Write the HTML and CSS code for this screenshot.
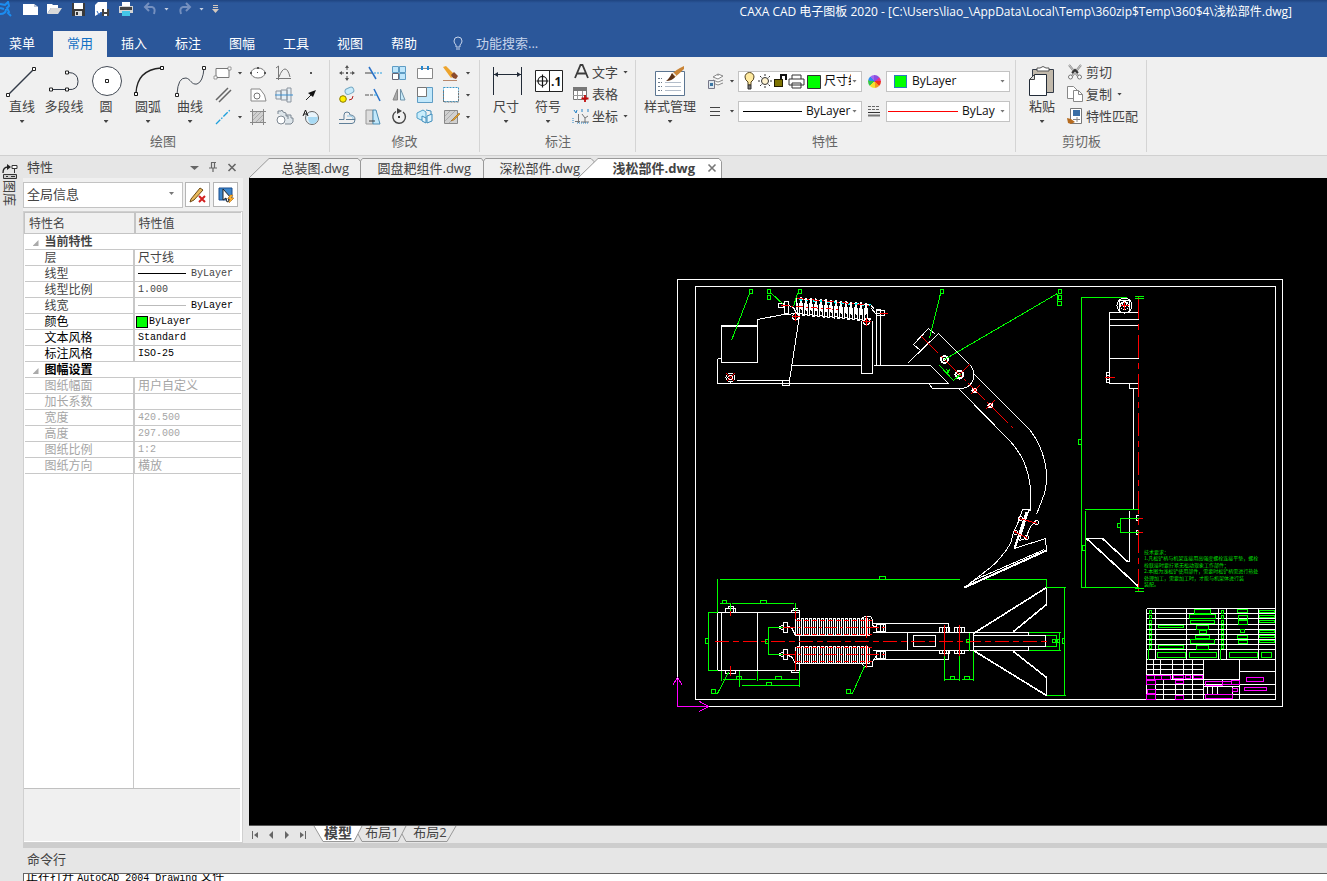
FILE: index.html
```html
<!DOCTYPE html>
<html lang="zh-CN">
<head>
<meta charset="utf-8">
<title>CAXA CAD 电子图板 2020</title>
<link rel="stylesheet" href="styles.css">
</head>
<body>
<header class="titlebar">
  <div class="quick">
    <svg class="q-app" viewBox="0 0 12 16"><path d="M0 3l5 1 3-3 1 4-2 2 2 4-1 1 3 3M0 7l4 1M0 13c4 0 6-2 6-5" fill="none" stroke="#1c8df0" stroke-width="2"/></svg>
    <button class="q-btn" aria-label="新建"><svg viewBox="0 0 16 16"><path d="M1 3h11l4 3v8H1z" fill="#fff"/><path d="M12 3v3h4z" fill="#b9c4d6"/></svg></button>
    <button class="q-btn" aria-label="打开"><svg viewBox="0 0 16 16"><path d="M1 13V3h5l1 1h5v3H5z" fill="#fff"/><path d="M5 7h11l-4 6H1z" fill="#d9d9d9"/></svg></button>
    <button class="q-btn" aria-label="保存"><svg viewBox="0 0 16 16"><path d="M2 2h13v13H2z" fill="#3a3a3a"/><path d="M4 2h9v6H4z" fill="#fff"/><path d="M5 10h7v5H5z" fill="#ddd"/><path d="M6 11h2v3H6z" fill="#333"/></svg></button>
    <button class="q-btn" aria-label="另存为"><svg viewBox="0 0 16 16"><path d="M1 15V4l3-3h9v7" fill="#fff"/><path d="M3 10l2 4 2-3 2 3" fill="none" stroke="#2b66c0"/><path d="M8 8h7v7H8z" fill="#444"/><path d="M10 8h3v3h-3zM10 13h3v2h-3z" fill="#fff"/></svg></button>
    <button class="q-btn" aria-label="打印"><svg viewBox="0 0 16 16"><path d="M4 1h8v5H4z" fill="#fff"/><path d="M1 5h14v7H1z" fill="#d4d4d4"/><path d="M2 6h12v3H2z" fill="#444"/><path d="M4 10h8v5H4z" fill="#43c6e8"/></svg></button>
    <button class="q-btn undo" aria-label="撤销"><svg viewBox="0 0 16 16"><path d="M7 2L3 6l4 4M3 6h7q4 1 2 7" fill="none" stroke="#7590bf" stroke-width="2"/></svg></button>
    <span class="caret light"></span>
    <button class="q-btn redo" aria-label="恢复"><svg viewBox="0 0 16 16"><path d="M9 2l4 4-4 4M13 6H6q-4 1-2 7" fill="none" stroke="#7590bf" stroke-width="2"/></svg></button>
    <span class="caret light last"></span>
    <svg class="q-more" viewBox="0 0 7 8"><path d="M1 0h5v1H1zM1 2h5v1H1zM0 4h7L3.500 8z" fill="#d5c9bd"/></svg>
  </div>
  <h1 class="title">CAXA CAD 电子图板 2020 - [C:\Users\liao_\AppData\Local\Temp\360zip$Temp\360$4\浅松部件.dwg]</h1>
</header>
<nav class="menubar">
  <button class="menu first">菜单</button>
  <button class="menu active">常用</button>
  <button class="menu">插入</button>
  <button class="menu">标注</button>
  <button class="menu">图幅</button>
  <button class="menu">工具</button>
  <button class="menu">视图</button>
  <button class="menu">帮助</button>
  <label class="search"><svg viewBox="0 0 12 14"><path d="M4 9q-2-2-2-4a4 4 0 0 1 8 0q0 2-2 4v2H4zM4 13h4" fill="none" stroke="#c5d3ea"/></svg><input type="text" placeholder="功能搜索..." aria-label="功能搜索"></label>
</nav>

<section class="ribbon">
  <div class="group g-draw">
    <div class="group-body">
      <button class="big"><svg viewBox="0 0 36 32"><path d="M4 29L30 3" stroke="#333b48" stroke-width="1.500"/><path d="M2.500 27.500h3v3h-3zM28.500 1.500h3v3h-3z" fill="#fff" stroke="#222"/></svg>直线<span class="caret"></span></button>
      <button class="big"><svg viewBox="0 0 36 32"><path d="M5 23.500h16M22 6.500q10 0 10 9t-10 8" fill="none" stroke="#333b48"/><path d="M3.500 22h3v3h-3zM19.500 22h3v3h-3zM19.500 5h3v3h-3z" fill="#fff" stroke="#222"/></svg>多段线</button>
      <button class="big"><svg viewBox="0 0 36 32"><circle cx="19" cy="15" r="14.500" fill="#fff" stroke="#444b55"/><path d="M17.500 13.500h3v3h-3z" fill="#fff" stroke="#222"/></svg>圆<span class="caret"></span></button>
      <button class="big"><svg viewBox="0 0 36 32"><path d="M6 27Q7 4 31 2" fill="none" stroke="#222" stroke-width="1.300"/><path d="M4.500 26.500h3v3h-3zM30.500.5h3v3h-3z" fill="#fff" stroke="#111"/></svg>圆弧<span class="caret"></span></button>
      <button class="big"><svg viewBox="0 0 36 32"><path d="M5 28q1-17 9-16c5 1 5 7 11 6q6-2 7-16" fill="none" stroke="#444b55"/><path d="M3.500 27.500h3v3h-3zM30.500.5h3v3h-3z" fill="#fff" stroke="#222"/></svg>曲线<span class="caret"></span></button>
      <div class="tools draw-tools">
        <button aria-label="矩形"><svg viewBox="0 0 20 20"><path d="M3 5.500h13v9H3z" fill="#fff" stroke="#777"/><path d="M1 13h3v3H1zM15 4h3v3h-3z" fill="#fff" stroke="#777" stroke-width=".7"/></svg></button><span class="caret"></span>
        <button aria-label="椭圆"><svg viewBox="0 0 20 20"><ellipse cx="10" cy="10" rx="7" ry="5" fill="#fff" stroke="#777"/><path d="M9 4h2v2H9zM2 9h2v2H2zM9 9h1v1H9zM16 9h2v2h-2z" fill="#555"/></svg></button>
        <button aria-label="公式曲线"><svg viewBox="0 0 20 20"><path d="M4.500 3v14M2 15.500h15M2 5l2.500-2M5 14q3-8 6-8t5 8" fill="none" stroke="#777"/></svg></button>
        <button aria-label="点"><svg viewBox="0 0 20 20"><path d="M9 9h2v2H9z" fill="#555"/></svg></button>
        <button aria-label="平行线"><svg viewBox="0 0 20 20"><path d="M3 15L15 3M6 17L18 5" stroke="#666" stroke-width="1.500"/></svg></button><span></span>
        <button aria-label="孔"><svg viewBox="0 0 20 20"><path d="M3 4h9q6 6 6 12H3z" fill="#fff" stroke="#888"/><circle cx="9" cy="11" r="3" fill="#fff" stroke="#777"/></svg></button>
        <button aria-label="轴"><svg viewBox="0 0 20 20"><path d="M2 6h5v8H2zM7 5h6v10H7zM13 3h4v14h-4z" fill="#e6eef4" stroke="#8b949e"/><path d="M1 10h18" stroke="#3b8fd0"/></svg></button>
        <button aria-label="箭头"><svg viewBox="0 0 20 20"><path d="M5 15l6-6" stroke="#222"/><path d="M15 5l-3 7-5-4z" fill="#111"/></svg></button>
        <button aria-label="构造线"><svg viewBox="0 0 20 20"><path d="M3 17L17 3" stroke="#1d9fdc" stroke-width="1.300" stroke-dasharray="6 1.500 1.500 1.500"/></svg></button><span class="caret"></span>
        <button aria-label="填充"><svg viewBox="0 0 20 20"><path d="M4 4h12v12H4z" fill="#d0d0d0"/><path d="M2 4.500h16M4.500 2v16M15.500 2v16M2 15.500h16" stroke="#888"/><path d="M5 13l8-8M5 9l4-4M8 15l7-7M12 15l3-3" stroke="#999" stroke-width=".7"/></svg></button>
        <button aria-label="零件"><svg viewBox="0 0 20 20"><path d="M4 7V4h3l1-1 1 2 3 1v3h2v3M12 8h5v3h2v4l-2 2h-6" fill="#dde5ea" stroke="#7d8792"/><circle cx="7" cy="13" r="4" fill="#fff" stroke="#7d8792"/></svg></button>
        <button aria-label="局部放大"><svg viewBox="0 0 20 20"><circle cx="11" cy="11" r="6.500" fill="#e8f4fb" stroke="#666"/><path d="M7 10h10q0 6-6 7-4-1-4-7z" fill="#a8daf4"/><path d="M2 9l2.500-6L7 9M3 7h3" fill="none" stroke="#111"/></svg></button>
      </div>
    </div>
    <h2>绘图</h2>
  </div>

  <div class="group g-edit">
    <div class="group-body">
      <div class="tools edit-tools">
        <button aria-label="平移"><svg viewBox="0 0 20 20"><path d="M10 3v4M10 13v4M3 10h4M13 10h4" stroke="#555"/><path d="M10 2l2 3H8zM10 18l2-3H8zM2 10l3-2v4zM18 10l-3-2v4zM9 9h2v2H9z" fill="#555"/></svg></button>
        <button aria-label="裁剪"><svg viewBox="0 0 20 20"><path d="M2 10h8" stroke="#444"/><path d="M6 4l7 12" stroke="#2a72c8" stroke-width="1.500"/><path d="M11 10h8" stroke="#2a9fe0" stroke-dasharray="2 1"/></svg></button>
        <button aria-label="阵列"><svg viewBox="0 0 20 20"><path d="M3.500 3.500h6v6h-6zM10.500 3.500h6v6h-6zM10.500 10.500h6v6h-6z" fill="#bfe6fb" stroke="#5e9cc4"/><path d="M3.500 10.500h6v6h-6z" fill="#fff" stroke="#667"/></svg></button>
        <button aria-label="打断"><svg viewBox="0 0 20 20"><path d="M6 5.500H2.500v10h15v-10H14M8 5.500h4" fill="#fff" stroke="#888"/><path d="M6 3h2v4H6zM12 3h2v4h-2z" fill="#2386cf"/></svg></button>
        <button aria-label="删除"><svg viewBox="0 0 20 20"><path d="M2 4l3-1 9 9-4 3z" fill="#eda42d"/><path d="M10 12l3-3 4 4-2 3-3-1z" fill="#8c4b2c"/><path d="M2 17.500h14" stroke="#b8876a"/></svg></button><span class="caret"></span>
        <button aria-label="复制"><svg viewBox="0 0 20 20"><rect x="8" y="3" width="9" height="6" rx="3" fill="#c8ebfb" stroke="#77a9c4" transform="rotate(-25 12 6)"/><circle cx="6" cy="14" r="3.300" fill="#ffef00" stroke="#8a7900"/><path d="M12 15q4 0 4-4" fill="none" stroke="#b42020"/></svg></button>
        <button aria-label="延伸"><svg viewBox="0 0 20 20"><path d="M2 10h4M7 10h3" stroke="#555"/><path d="M11 4l6 12" stroke="#2a72c8" stroke-width="1.500"/><path d="M11 10h3" stroke="#2a9fe0"/></svg></button>
        <button aria-label="镜像"><svg viewBox="0 0 20 20"><path d="M8.500 4v11H4z" fill="#aaa" stroke="#888"/><path d="M11.500 4v11H16z" fill="#c9ebfa" stroke="#6f93aa"/></svg></button>
        <button aria-label="缩放"><svg viewBox="0 0 20 20"><path d="M2.500 2.500h15v15h-15z" fill="#c2e8fb" stroke="#5e9cc4"/><path d="M2.500 2.500h9v9h-9z" fill="#fff" stroke="#777"/></svg></button>
        <button aria-label="拉伸"><svg viewBox="0 0 20 20"><path d="M2.500 2.500h15v14h-15z" fill="#fff" stroke="#3797ca" stroke-dasharray="2 1"/><path d="M2.500 6v11h15V6" fill="none" stroke="#777" stroke-dasharray="2 1"/></svg></button><span class="caret"></span>
        <button aria-label="等距线"><svg viewBox="0 0 20 20"><path d="M2 12.500h5V8q0-3 3-3t3 3q5 0 5 4.500H9M2 16.500h13q3 0 3-4" fill="none" stroke="#5f7f98"/><path d="M10 9h4q3 1 2 3" fill="none" stroke="#8cc4e4"/></svg></button>
        <button aria-label="拔模"><svg viewBox="0 0 20 20"><path d="M3 3h7v14H3z" fill="#ddd" stroke="#999"/><path d="M10 3h3l4 14h-7z" fill="#c2e8fb" stroke="#4c8db3"/><path d="M6 14h6" stroke="#444"/></svg></button>
        <button aria-label="旋转"><svg viewBox="0 0 20 20"><path d="M7 4.500A6.300 6.300 0 1 0 14 5" fill="none" stroke="#444" stroke-width="1.400"/><path d="M8 1l5 3-5 3z" fill="#444"/><path d="M9 9h2v2H9z" fill="#333"/></svg></button>
        <button aria-label="分解"><svg viewBox="0 0 20 20"><path d="M2 6l6-3 3 2v6l-5 2-4-2z" fill="#c9edfc" stroke="#4f9fc8"/><path d="M7 9l4 2v5l-4-2zM12 9l5-2v7l-5 2z" fill="#e0f4fd" stroke="#3c8cbb"/><path d="M11 3l5 1v3" fill="none" stroke="#3c8cbb"/></svg></button>
        <button aria-label="编辑填充"><svg viewBox="0 0 20 20"><path d="M3.500 3.500h13v13h-13z" fill="#d0d0d0" stroke="#888"/><path d="M4 9l5-5M4 14L14 4M8 16l8-8" stroke="#aaa"/><path d="M18 6l-6 6-2 2 3-1 6-6z" fill="#e8a42c" stroke="#8d5b12" stroke-width=".5"/></svg></button><span class="caret"></span>
      </div>
    </div>
    <h2>修改</h2>
  </div>

  <div class="group g-dim">
    <div class="group-body">
      <button class="big"><svg viewBox="0 0 36 32"><path d="M5.500 1v28M33.500 1v28M6 8.500h27" stroke="#222b38"/><path d="M6 8.500l4-2.500v5zM33 8.500l-4-2.500v5z" fill="#222b38"/></svg>尺寸<span class="caret"></span></button>
      <button class="big"><svg viewBox="0 0 36 32"><path d="M5.500 4.500h27v21h-27zM19.500 4.500v21" fill="#fff" stroke="#222"/><circle cx="12.500" cy="15" r="4.500" fill="none" stroke="#111" stroke-width="1.200"/><path d="M6.500 15h12M12.500 8.500v13" stroke="#111" stroke-width="1.200"/><text x="21" y="20" class="symbol-text">.1</text></svg>符号<span class="caret"></span></button>
      <div class="list">
        <button><svg viewBox="0 0 20 20"><path d="M4 16L9.500 3h2L17 16M6 11.500h9" fill="none" stroke="#3c3c3c" stroke-width="1.800"/></svg>文字<span class="caret"></span></button>
        <button><svg viewBox="0 0 20 20"><path d="M2.500 3.500h13v12h-13z" fill="#fff" stroke="#777"/><path d="M2 3h14v4H2z" fill="#777"/><path d="M2 11.500h13M6.500 7v9M11.500 7v9" stroke="#999"/><path d="M14 11v7M10.500 14.500h7" stroke="#c00d0d" stroke-width="1.800"/></svg>表格</button>
        <button><svg viewBox="0 0 20 20"><path d="M7.500 8v9M4 15.500h5M11 8l3 4v5M17 10l-3 2M10 16h8" fill="none" stroke="#777"/><path d="M3 4l2 3 1-3M11 3v3M17 3v3" stroke="#2684c8" fill="none"/><path d="M2 12v6M6 17h12" stroke="#2684c8" stroke-dasharray="1 1"/></svg>坐标<span class="caret"></span></button>
      </div>
    </div>
    <h2>标注</h2>
  </div>

  <div class="group g-prop">
    <div class="group-body">
      <button class="big wide"><svg viewBox="0 0 36 32"><path d="M3.500 5.500h29v24h-29z" fill="#fff" stroke="#5b7591"/><path d="M6 12.500h4M6 16.500h4M6 20.500h4M6 24.500h4" stroke="#6d7b8b" stroke-dasharray="2 1"/><path d="M13 16.500h16M13 20.500h16M13 24.500h16" stroke="#b3bdca"/><path d="M32 0q-9 4-13 9l3 3q6-5 10-9z" fill="#c98436"/><path d="M20 7q-3 6-6 8 6 0 9-4z" fill="#5d3318"/><path d="M21 7l3 3" stroke="#eee" stroke-width="1.500"/></svg>样式管理<span class="caret"></span></button>
      <div class="prop-grid">
        <button aria-label="图层"><svg viewBox="0 0 20 20"><path d="M8 6l5-3 5 2-5 3zM8 9l5 2 5-2M8 12l5 2 5-2M13 3v2" fill="#fff" stroke="#888"/><path d="M3.500 9.500h6v8h-6z" fill="#dfe8ef" stroke="#778"/><path d="M5 12h3v3H5z" fill="#3b76a5"/></svg></button><span class="caret"></span>
        <div class="combo">
          <svg class="layer-icons" viewBox="0 0 78 20"><path d="M5 11q-3-2-3-5a4 4 0 0 1 9 0q0 3-3 5v3H5z" fill="#ffeaa0" stroke="#53431f"/><path d="M5 14h3v4H5z" fill="#777" stroke="#333"/><circle cx="22" cy="10" r="3.500" fill="#fff3cf" stroke="#333"/><path d="M22 3v2M22 15v2M15 10h2M27 10h2M17 5l1.500 1.500M25.500 13.500L27 15M27 5l-1.500 1.500M17 15l1.500-1.500" stroke="#333"/><path d="M31 8h9v8h-9z" fill="#201c00"/><path d="M32 10h7M32 12h7M32 14h7" stroke="#d9c800"/><path d="M38 8V4h5v5" fill="none" stroke="#111" stroke-width="2"/><path d="M49 8V4h9v4M46 8h15v6H46zM49 12h9v5h-9z" fill="#fff" stroke="#333"/><path d="M64.500 4.500h13v13h-13z" fill="#0f0" stroke="#333"/></svg>
          <select aria-label="当前图层"><option>尺寸线</option></select><span class="caret grey"></span>
        </div>
        <span class="wheel"></span>
        <div class="combo color"><span class="swatch"></span><select aria-label="颜色"><option>ByLayer</option></select><span class="caret grey"></span></div>
        <button aria-label="线型"><svg viewBox="0 0 20 20"><path d="M5 6.500h10M5 10.500h10M5 14.500h10" stroke="#444"/></svg></button><span class="caret"></span>
        <div class="combo"><span class="stroke-line"></span><select aria-label="线型"><option>ByLayer</option></select><span class="caret grey"></span></div>
        <svg class="weights" viewBox="0 0 14 14"><path d="M1 2.500h12M1 5.500h12" stroke="#666" stroke-dasharray="3 1"/><path d="M1 8.500h12" stroke="#333"/><path d="M1 11.500h12" stroke="#777" stroke-width="2"/></svg>
        <div class="combo weight"><span class="stroke-line red"></span><select aria-label="线宽"><option>ByLayer</option></select><span class="caret grey"></span></div>
      </div>
    </div>
    <h2>特性</h2>
  </div>

  <div class="group g-clip">
    <div class="group-body">
      <button class="big"><svg viewBox="0 0 36 32"><path d="M8.500 3.500h21v23h-21z" fill="#c2b9ab" stroke="#333b48"/><path d="M13 5V2h3q3-3 6 0h3v3z" fill="#fff" stroke="#555"/><path d="M10.500 8.500h12v21h-17v-16z" fill="#fff" stroke="#222b38"/><path d="M10.500 8.500v5h-5z" fill="#ddd" stroke="#444"/></svg>粘贴<span class="caret"></span></button>
      <div class="list">
        <button><svg viewBox="0 0 20 20"><path d="M4 3l9 11M16 3L7 14" stroke="#888" stroke-width="2"/><path d="M4 3l9 11M16 3L7 14" stroke="#eee" stroke-width=".7"/><path d="M7 11l3-3 3 3" stroke="#333" stroke-width="2" fill="none"/><circle cx="5.500" cy="15" r="2" fill="#fff" stroke="#777"/><circle cx="14.500" cy="15" r="2" fill="#fff" stroke="#777"/></svg>剪切</button>
        <button><svg viewBox="0 0 20 20"><path d="M2.500 2.500h6l4 4v8h-10z" fill="#fff" stroke="#888"/><path d="M8.500 6.500h5l4 4v7h-9z" fill="#fff" stroke="#888"/><path d="M13.500 6.500v4h4" fill="none" stroke="#888"/></svg>复制<span class="caret"></span></button>
        <button><svg viewBox="0 0 20 20"><path d="M5.500 2.500h11v15h-11z" fill="#fff" stroke="#777"/><path d="M8 4h7v6H8z" fill="#3a6ea5"/><path d="M8 13.500h7M12 11v5" stroke="#888"/><path d="M2 12l4 1 4 3-4 2-3-1z" fill="#b66b1f"/></svg>特性匹配</button>
      </div>
    </div>
    <h2>剪切板</h2>
  </div>
</section>

<main class="workspace">
  <aside class="rail">
    <svg viewBox="0 0 16 17"><path d="M1 10q0-6 5-6" fill="none" stroke="#222" stroke-width="1.300"/><path d="M5 1l4 3-4 3z" fill="#222"/><path d="M10 2.500h5v3h-5zM12.500 5v5" fill="#fff" stroke="#333"/><path d="M1.500 11.500h13v4h-13z" fill="#ccc" stroke="#333"/><path d="M4 13.500h2M9 13.500h4" stroke="#333"/></svg>
    <button>图库</button>
  </aside>

  <section class="props">
    <header>
      <h2>特性</h2>
      <button aria-label="菜单"><svg viewBox="0 0 10 10"><path d="M1 4h9L5.500 8z" fill="#666"/></svg></button>
      <button aria-label="固定"><svg viewBox="0 0 10 10"><path d="M3 .5h5M3.500.5v5M6.500.5v5M1 6h8M5 6v4" fill="none" stroke="#666" stroke-width="1.200"/></svg></button>
      <button aria-label="关闭"><svg viewBox="0 0 10 10"><path d="M1.500 2l7 7M8.500 2l-7 7" stroke="#666" stroke-width="1.600"/></svg></button>
    </header>
    <div class="props-bar">
      <div class="combo big-combo"><select aria-label="选择对象"><option>全局信息</option></select><span class="caret grey"></span></div>
      <button aria-label="清除"><svg viewBox="0 0 18 18"><path d="M2 13L11 2l3 2L5 14l-4 2z" fill="#eab95b" stroke="#6b4a16"/><path d="M10 10l6 6M16 10l-6 6" stroke="#d32020" stroke-width="2"/></svg></button>
      <button aria-label="快速选择"><svg viewBox="0 0 18 18"><path d="M2 2h13v12H2z" fill="#3d86cb" stroke="#1d4f8f"/><path d="M6 3v11l3-2 1 4 2-1-1-3h3z" fill="#fff" stroke="#222"/><path d="M13 9h3l-2 3h3l-5 5 1-4h-2z" fill="#ffb733" stroke="#c26a00" stroke-width=".5"/></svg></button>
    </div>
    <div class="props-frame">
      <div class="props-scroll">
        <table>
          <thead><tr><th>特性名</th><th>特性值</th></tr></thead>
          <tbody>
            <tr class="cat"><td colspan="2"><i></i>当前特性</td></tr>
            <tr><td>层</td><td>尺寸线</td></tr>
            <tr><td>线型</td><td><span class="cell"><b class="ln"></b><span class="mono">ByLayer</span></span></td></tr>
            <tr><td>线型比例</td><td><span class="mono">1.000</span></td></tr>
            <tr><td>线宽</td><td class="dark"><span class="cell"><b class="ln thin"></b><span class="mono">ByLayer</span></span></td></tr>
            <tr class="dark"><td>颜色</td><td><span class="cell tight"><b class="sw"></b><span class="mono">ByLayer</span></span></td></tr>
            <tr class="dark"><td>文本风格</td><td><span class="mono">Standard</span></td></tr>
            <tr class="dark"><td>标注风格</td><td><span class="mono">ISO-25</span></td></tr>
            <tr class="cat dark"><td colspan="2"><i></i>图幅设置</td></tr>
            <tr class="off"><td>图纸幅面</td><td>用户自定义</td></tr>
            <tr class="off"><td>加长系数</td><td></td></tr>
            <tr class="off"><td>宽度</td><td><span class="mono">420.500</span></td></tr>
            <tr class="off"><td>高度</td><td><span class="mono">297.000</span></td></tr>
            <tr class="off"><td>图纸比例</td><td><span class="mono">1:2</span></td></tr>
            <tr class="off"><td>图纸方向</td><td>横放</td></tr>
          </tbody>
        </table>
      </div>
      <div class="props-help"></div>
    </div>
  </section>

  <section class="docs">
    <div class="doc-tabs">
      <button class="doc t1"><svg viewBox="0 0 112 20"><path d="M0 20L20 .5h89l2.500 3V20" fill="#f0f0f0" stroke="#999"/></svg><span>总装图.dwg</span></button>
      <button class="doc t2"><svg viewBox="0 0 123 20"><path d="M-.5 20V3l2-2.500h119l2 3V20" fill="#f0f0f0" stroke="#999"/></svg><span>圆盘耙组件.dwg</span></button>
      <button class="doc t3"><svg viewBox="0 0 110 20"><path d="M-.5 20V3l2-2.500H107l3 3V20" fill="#f0f0f0" stroke="#999"/></svg><span>深松部件.dwg</span></button>
      <button class="doc t4"><svg viewBox="0 0 144 20"><path d="M0 20L20 .5h121l2.500 3V20" fill="#fff" stroke="#999"/></svg><span>浅松部件.dwg</span><svg class="x" viewBox="0 0 10 10"><path d="M1.500 1.500l7 7M8.500 1.500l-7 7" stroke="#777" stroke-width="1.600"/></svg></button>
    </div>
    <div class="canvas">
      <svg viewBox="249 178 1078 647" role="img" aria-label="浅松部件图纸">
        <g transform="translate(.5 .5)" fill="none" shape-rendering="crispEdges">
          <g stroke="#fff">
            <!-- sheet frame -->
            <path d="M677 279H1282V706H677zM695 286H1275V699H695z"/>
            <!-- elevation: frame and beam -->
            <path d="M721 325h36v37h-36zM717 358v25H948M717 358h4M736 380h53M782 380h7v5h-7zM789 380L799 315M757 325V319L783 314 799 313M791 365H861M873 365H930L948 383M861 320V373h11V320M876 365V309h4V365"/>
            <path d="M721 325h36v1h-36zM721 325v37"/>
            <path d="M778 303h5v4h-5zM784 301h4v12h-4zM788 305l5 2 3 6 4 3M871 308l4 5h11M876 310h8v5h-8zM870 304l4 5"/>
            <circle cx="730" cy="377" r="4.500"/><circle cx="730" cy="377" r="2.500"/>
            <circle cx="795" cy="316" r="3"/><circle cx="866" cy="321" r="3"/>
            <g transform="translate(796 297) skewY(5)">
              <path d="M0 0l1 17h2l1-17h1l1 17h2l1-17h1l1 17h2l1-17h1l1 17h2l1-17h1l1 17h2l1-17h1l1 17h2l1-17h1l1 17h2l1-17h1l1 17h2l1-17h1l1 17h2l1-17h1l1 17h2l1-17h1l1 17h2l1-17h1l1 17h2l1-17h1l1 17h2l1-17h1l1 17h2l1-17h1l1 15h3" stroke-width="1.400"/>
              <path d="M0 1h73M2 16h68" stroke-dasharray="3 2"/>
            </g>
            <!-- elevation: shank -->
            <path d="M907 363L938 333 970 365Q976 373 972 381 968 388 960 388H932L929 384M913 344L928 328 935 334M913 344L920 350"/>
            <path d="M974 374L1029 429Q1040 443 1044 460 1048 477 1044 493L1036 514M959 389L1010 441Q1019 452 1023 460 1030 477 1030 493V510"/>
            <path d="M1022 509h7L1014 548 1045 538 1046 550 964 587M1022 509L1018 521 1013 532 1010 543Q1001 558 990 567L964 587 975 579 1044 549M1028 510L1019 540 1025 538 1030 526 1036 520"/>
            <path d="M964 587L1046 550M1026 512L1014 548" stroke-width="2"/>
            <g stroke-width="2"><circle cx="944" cy="359" r="3.500"/><circle cx="959" cy="374" r="4"/><circle cx="974" cy="390" r="2"/><circle cx="990" cy="405" r="2"/></g>
            <circle cx="944" cy="359" r="1"/><circle cx="959" cy="374" r="1.500"/>
            <circle cx="1020" cy="518" r="2"/><circle cx="1036" cy="522" r="2"/><circle cx="1015" cy="532" r="2"/><circle cx="1026" cy="537" r="2"/>
            <!-- side view -->
            <path d="M1138 312H1109V383H1138M1109 319h29M1109 325h29M1109 358h29M1129 383v5h9M1133 388V509M1129 510V561M1106 372h3v10h-3zM1106 375h3M1106 379h3M1119 312V300h10v12M1138 515h-2v5h2M1138 530h-2v4h2"/>
            <path d="M1129 561h-2L1102 538H1086L1138 586" stroke-width="1.600"/>
            <circle cx="1124" cy="305" r="7.500"/><circle cx="1124" cy="305" r="4"/><circle cx="1124" cy="304" r="2"/>
            <!-- plan view -->
            <path d="M717 612H799V670H717zM721 612v58M757 612v58M725 612v-4h10v4M728 608v-2h5v6M725 670v3h10v-3M791 612v-2h8v2M793 610v-2h4M791 670v2h8"/>
            <path d="M778 627l5-3v6zM783 622h4v10h-4zM787 626l4 1 4 8M778 654l5-3v6zM783 649h4v10h-4zM787 655l4 1 4 7M795 618v17h74v-17M795 646v17h74v-17"/>
            <path d="M795 618v17h2v-17h2v17h2v-17h2v17h2v-17h2v17h2v-17h2v17h2v-17h2v17h2v-17h2v17h2v-17h2v17h2v-17h2v17h2v-17h2v17h2v-17h2v17h2v-17h2v17h2v-17h2v17h2v-17h2v17h2v-17h2v17h2v-17h2v17h2v-17h2v17h2v-17h2v17h2v-17h2v17"/>
            <path d="M795 646v17h2v-17h2v17h2v-17h2v17h2v-17h2v17h2v-17h2v17h2v-17h2v17h2v-17h2v17h2v-17h2v17h2v-17h2v17h2v-17h2v17h2v-17h2v17h2v-17h2v17h2v-17h2v17h2v-17h2v17h2v-17h2v17h2v-17h2v17h2v-17h2v17h2v-17h2v17h2v-17h2v17"/>
            <path d="M861 618l3-2h6l2 3v6l4 2M876 624h9v7h-9zM880 624v7M883 624v7M861 663l3 3h8v-5l4-6M876 651h9v7h-9zM880 651v7M883 651v7"/>
            <path d="M872 623H948v9M872 632H1028v3M872 650H1028v-4M872 659H948v-9M907 632v18M913 635h22v11h-22zM973 635h72v11h-72M973 632v18"/>
            <path d="M939 632v-5h10v5M941 627h5M942 627v5M946 627v5M954 632v-5h10v5M956 627h5M957 627v5M961 627v5M939 650v3h10v-3M942 650v3M946 650v3M954 650v3h10v-3M957 650v3M961 650v3"/>
            <path d="M973 633L1046 587V604L1013 631V632M973 650L1046 695V677L1013 651" stroke-width="1.600"/>
            <!-- title block -->
            <path d="M1146 608H1275M1146 608V699M1146 613H1275M1146 618H1275M1146 624H1275M1146 629H1275M1146 634H1275M1146 639H1275M1146 644H1275M1146 649H1275M1146 659H1275M1155 608v51M1186 608v51M1218 608v51M1226 608v51M1258 608v51"/>
            <path d="M1203 659v40M1239 659v40M1146 664h57M1146 669h57M1146 674h57M1146 679h93M1153 659v15M1160 659v15M1172 659v20M1183 659v40M1192 659v40M1146 684h57M1146 689h57M1146 694h57M1155 679v20M1163 679v20M1175 679v20M1239 671h36M1203 684h72M1203 694h72M1203 686h36M1207 686v7M1212 686v7M1217 686v7M1232 686v7M1222 679v7"/>
          </g>
          <g stroke="#0ff" stroke-width="2"><path d="M799 299L870 305" stroke-dasharray="3 4 2 5"/></g>
          <g stroke="#f00">
            <path d="M781 305L838 309M797 298L872 305" stroke-dasharray="7 3 2 3"/>
            <path d="M791 316h8M795 312v8M862 321h8M866 317v8M726 373l8 8M734 373l-8 8M879 313h8M955 378l14-14"/>
            <path d="M921 336L1015 430" stroke-dasharray="24 3 3 3"/>
            <path d="M970 394l9-9M985 409l9-9M1019 518l18 5M1014 531l13 7M1104 377h10M1120 305h8M1124 301v8M1138 518h4M1138 532h4"/>
            <path d="M1138 295V593" stroke-dasharray="23 5 6 5"/>
            <path d="M714 641H1047" stroke-dasharray="14 4 6 4"/>
            <path d="M795 620h76M795 634h76M795 647h76M795 661h76" stroke-dasharray="5 3"/>
            <path d="M782 627h105M782 654h105" stroke-dasharray="12 3 3 3"/>
            <path d="M730 602v13M730 665v10M795 610v8M795 650v20M866 615v22M866 644v23M944 624v32M959 624v32"/>
          </g>
          <g stroke="#0f0">
            <!-- leaders -->
            <path d="M749 293L731 340M749 289h3v4h-3zM771 293l12 11M767 289h3v4h-3zM767 295h3v4h-3zM798 289h3v4h-3zM797 293l-4 13"/>
            <path d="M940 293L929 338M940 289h3v4h-3zM1057 293L944 359M1057 293v12h4v-4h-4M1058 289h3v4h-3zM1058 295h3v4h-3zM939 365l14 15 8-7M946 369l3 4M949 369l-2 4"/>
            <!-- vertical dimensions -->
            <path d="M1080 297h46M1081 297V587M1080 587h58M1078 439h3v5h-3zM1084 509h54M1085 510V586M1082 545h3v5h-3zM1119 518h19M1119 532h19M1120 518v14M1117 523h3v4h-3zM1134 296h9M1134 298h9M1134 588h9M1134 591h9"/>
            <!-- plan dimensions -->
            <path d="M717 578v34M719 579H959M985 579h60M879 576h6v3h-6zM1046 578v9M719 603h10M731 603h62M722 600h4v3h-4zM760 600h6v3h-6zM730 602v8M795 602v8"/>
            <path d="M707 612h10M707 670h10M708 612v58M705 638h3v5h-3zM767 627h15M767 654h15M768 627v27M765 639h3v4h-3z"/>
            <path d="M722 679h33M758 679h39M736 676h5v3h-5zM775 676h6v3h-6zM741 685h57M766 682h5v3h-5zM721 670v10M757 670v10M739 670v16M799 670v16M710 693h7l11-21M711 689h4v4h-4zM845 693h7l12-27M846 689h4v4h-4z"/>
            <path d="M944 655v25M959 655v25M973 650v30M944 679h14M961 679h11M950 676h4v3h-4zM964 676h5v3h-5zM969 632v18M966 639h3v3h-3z"/>
            <path d="M1046 587h19M1046 695h19M1064 587v108M1062 638h2v5h-2zM1028 632h32M1028 650h32M1059 632v18M1057 639h2v3h-2zM1045 635h11v11h-11M1052 639h3v3h-3z"/>
            <!-- parts list entries -->
            <path d="M1149 610h2v3h-2zM1149 615h2v3h-2zM1149 620h2v3h-2zM1149 625h2v3h-2zM1149 630h2v3h-2zM1149 635h2v3h-2zM1149 640h2v3h-2zM1149 645h2v3h-2zM1221 610h2v3h-2zM1221 615h2v3h-2zM1221 620h2v3h-2zM1221 625h2v3h-2zM1221 630h2v3h-2zM1221 635h2v3h-2zM1221 640h2v3h-2zM1221 645h2v3h-2z"/>
            <path d="M1194 609h16v4h-16zM1189 614h26v4h-26zM1190 620h24v3h-24zM1196 625h12v4h-12zM1199 630h7v3h-7zM1195 635h14v3h-14zM1190 639h24v4h-24zM1196 645h12v4h-12zM1158 625h25v2h-25zM1158 645h25v3h-25z"/>
            <path d="M1237 609h10v3h-10zM1238 615h9v4h-9zM1238 620h9v4h-9zM1240 629h4v3h-4zM1237 635h10v3h-10zM1238 640h9v3h-9zM1259 610h15v2h-15zM1259 615h15v2h-15zM1259 620h15v2h-15zM1259 630h15v2h-15zM1259 635h15v2h-15zM1259 640h15v2h-15z"/>
            <path d="M1157 652h28v5h-28zM1189 652h27v5h-27zM1229 652h28v5h-28zM1261 652h10v5h-10zM1148 648v11M1220 648v11"/>
          </g>
          <g stroke="#f0f">
            <path d="M1146 675h8v4h-8zM1154 675h7v4h-7zM1161 675h9v4h-9zM1173 675h10v3h-10zM1185 675h5v3h-5zM1193 675h9v3h-9zM1146 680h9v4h-9zM1175 680h8v3h-8zM1147 689h8v4h-8zM1146 694h9v5h-9zM1175 695h8v4h-8zM1205 681h17v4h-17zM1222 681h9v3h-9zM1231 680h8v4h-8zM1232 688h5v3h-5zM1205 694h27v4h-27zM1246 677h17v4h-17zM1244 687h22v3h-22z"/>
            <path d="M677 678V706H708M677 677l-5 8M677 677l5 8M708 706l-9-5M708 706l-9 5"/>
          </g>
        </g>
        <g class="notes">
          <text x="1144" y="554">技术要求：</text>
          <text x="1144" y="560">1.凡松铲柄与机架连接用高强度螺栓连接平垫，螺栓</text>
          <text x="1144" y="567">栓联接时要拧紧无松动现象工作部件；</text>
          <text x="1144" y="573">2.本图为浅松铲使用部件，需要时松铲柄需进行热处</text>
          <text x="1144" y="580">处理加工，需要加工时，才能与机架体进行装</text>
          <text x="1144" y="586">装配。</text>
        </g>
      </svg>
    </div>
    <div class="sheet-tabs">
      <div class="nav">
        <button aria-label="第一页"><svg viewBox="0 0 8 8"><path d="M1 0h1v8H1zM7 1v6L3 4z" fill="#666"/></svg></button>
        <button aria-label="上一页"><svg viewBox="0 0 8 8"><path d="M6 0v8L2 4z" fill="#666"/></svg></button>
        <button aria-label="下一页"><svg viewBox="0 0 8 8"><path d="M2 0v8l4-4z" fill="#666"/></svg></button>
        <button aria-label="最后页"><svg viewBox="0 0 8 8"><path d="M6 0h1v8H6zM1 1v6l4-3z" fill="#666"/></svg></button>
      </div>
      <button class="sheet on"><svg viewBox="0 0 48 17"><path d="M0 0l9 15.500h31L48 0" fill="#fff" stroke="#999"/></svg><span>模型</span></button>
      <button class="sheet second"><svg viewBox="0 0 48 17"><path d="M0 8l4 7.500h36L48 0" fill="none" stroke="#999"/></svg><span>布局1</span></button>
      <button class="sheet"><svg viewBox="0 0 48 17"><path d="M-4 8l4 7.500h41L50 0" fill="none" stroke="#999"/></svg><span>布局2</span></button>
    </div>
  </section>
</main>

<footer class="command">
  <h2>命令行</h2>
  <div class="log" role="log">正在打开 <span class="mono">AutoCAD 2004 Drawing</span> 文件</div>
</footer>
</body>
</html>
```
FILE: styles.css
```css
* { box-sizing: border-box; }

body {
  margin: 0;
  height: 100vh;
  display: flex;
  flex-direction: column;
  overflow: hidden;
  background: #e6e6e6;
  color: #444;
  font: 13px/18px "Open Sans", "Noto Sans CJK SC", sans-serif;
}

button, input, select { font: inherit; color: inherit; }
button { border: 0; padding: 0; background: none; }
h1, h2 { margin: 0; font-size: 13px; font-weight: 400; }
svg { display: block; flex: none; }

.caret {
  width: 5px;
  height: 3px;
  flex: none;
  background: #444;
  clip-path: polygon(0 0, 100% 0, 50% 100%);
}
.caret.light { background: #c5cfe2; }
.caret.grey { background: #777; }

/* title bar */
.titlebar {
  height: 31px;
  flex: none;
  display: flex;
  justify-content: space-between;
  background: linear-gradient(#1f4480, #2b579a 3px);
  color: #fff;
  overflow: hidden;
}
.quick { display: flex; align-items: center; height: 18px; }
.q-app { width: 12px; height: 16px; margin-right: 10px; }
.q-btn { width: 16px; margin-right: 8px; }
.q-btn.undo, .q-btn.redo { margin-right: 6px; }
.q-btn svg { width: 16px; height: 16px; }
.quick .caret.light { margin-right: 8px; }
.q-more { width: 7px; height: 8px; }
.title { font-size: 12px; line-height: 24px; margin-right: 35px; white-space: nowrap; }

/* menu tabs */
.menubar { height: 26px; flex: none; display: flex; background: #2b579a; color: #fff; }
.menu { width: 54px; padding-bottom: 2px; }
.menu.first { width: 44px; margin-right: 9px; }
.menu.active { background: #f0f0f0; color: #1270c4; }
.search { display: flex; align-items: center; gap: 12px; margin-left: 21px; padding-bottom: 2px; color: #c5d3ea; }
.search svg { width: 12px; height: 14px; }
.search input { width: 120px; border: 0; padding: 0; background: none; outline: 0; }
.search input::placeholder { color: #c5d3ea; opacity: 1; }

/* ribbon */
.ribbon {
  height: 99px;
  flex: none;
  display: flex;
  background: #f0f0f0;
  border-bottom: 1px solid #d0d0d0;
  padding: 3px 0;
}
.group { display: flex; flex-direction: column; border-right: 1px solid #d4d4d4; }
.group-body { display: flex; height: 73px; }
.group h2 { text-align: center; line-height: 16px; padding-right: 4px; color: #666; }
.g-draw { width: 330px; padding-left: 1px; }
.g-edit { width: 150px; padding-left: 4px; }
.g-dim { width: 156px; padding-left: 5px; }
.g-prop { width: 380px; padding-left: 3px; }
.g-clip { width: 131px; padding-left: 5px; }
.big {
  width: 42px;
  display: flex;
  flex-direction: column;
  align-items: center;
  padding-top: 6px;
  line-height: 16px;
  white-space: nowrap;
}
.big svg { width: 36px; height: 32px; }
.big .caret { margin-top: 6px; }
.big.wide { width: 62px; }
.symbol-text { font: bold 12px "Open Sans", sans-serif; fill: #111; }
.tools { display: grid; grid-auto-rows: 22px; align-items: center; justify-items: center; padding-top: 2px; }
.tools svg { width: 20px; height: 20px; }
.draw-tools { grid-template-columns: 22px 12px 24px 28px 25px; margin-left: 1px; }
.edit-tools { grid-template-columns: repeat(5, 26px) 8px; }
.list { display: flex; flex-direction: column; padding-top: 1px; margin-left: 2px; }
.list button { height: 22px; display: flex; align-items: center; gap: 1px; white-space: nowrap; }
.list svg { width: 20px; height: 20px; }
.list .caret { margin-left: 4px; }
.prop-grid {
  display: grid;
  grid-template-columns: 22px 12px 124px 24px 124px;
  grid-auto-rows: 30px;
  align-items: center;
  justify-items: center;
  padding: 6px 0 0 3px;
}
.prop-grid > button svg { width: 20px; height: 20px; }
.combo {
  width: 100%;
  height: 21px;
  display: flex;
  align-items: center;
  background: #fff;
  border: 1px solid #c3c3c3;
  padding: 0 4px;
  color: #111;
}
.combo select {
  flex: 1;
  min-width: 0;
  height: 19px;
  appearance: none;
  border: 0;
  padding: 0;
  background: none;
  font-size: 12px;
}
.prop-grid .combo > .caret { margin-left: 1px; }
.layer-icons { width: 78px; height: 20px; margin-right: 3px; }
.wheel {
  width: 13px;
  height: 13px;
  border-radius: 50%;
  background: conic-gradient(#8d4fe0 0 45deg, #e8338f 45deg 90deg, #f03020 90deg 130deg, #f59a20 130deg 180deg, #f5e030 180deg 225deg, #35c645 225deg 280deg, #2c8df0 280deg 320deg, #a06af0 320deg);
}
.swatch { width: 13px; height: 13px; background: #0f0; border: 1px solid #2c7ac0; margin: 0 5px 0 3px; }
.stroke-line { width: 59px; height: 1px; background: #000; margin-right: 4px; flex: none; }
.combo .stroke-line.red { width: 70px; background: #f00; }
.combo.weight { padding-left: 1px; }
.prop-grid .weight > .caret { margin-left: 5px; }
.weights { width: 14px; height: 14px; }

/* workspace */
.workspace { flex: 1; min-height: 0; display: flex; }
.rail { width: 23px; flex: none; padding: 7px 0 0 2px; }
.rail svg { width: 16px; height: 17px; }
.rail button { writing-mode: vertical-rl; text-orientation: sideways; line-height: 16px; }

.props { width: 220px; flex: none; display: flex; flex-direction: column; }
.props header { height: 22px; display: flex; align-items: center; padding: 0 6px 0 4px; gap: 9px; }
.props header h2 { flex: 1; }
.props header svg { width: 10px; height: 10px; }
.props-bar { height: 33px; display: flex; align-items: center; background: #f0f0f0; }
.props-bar > button { width: 25px; height: 25px; border: 1px solid #b5b5b5; background: #fff; display: grid; place-items: center; margin-left: 3px; }
.props-bar svg { width: 18px; height: 18px; }
.combo.big-combo { width: 160px; height: 26px; padding: 0 8px 2px 3px; color: #444; margin-right: -1px; }
.big-combo select { font-size: 13px; }
.props-frame {
  flex: 1;
  min-height: 0;
  display: flex;
  flex-direction: column;
  background: #fff;
  border: 1px solid #d0d0d0;
}
.props-scroll {
  flex: 1;
  margin-right: 1px;
  background: linear-gradient(90deg, transparent 109px, #c8c8c8 109px 110px, transparent 110px);
}
.props table { width: 100%; border-collapse: collapse; table-layout: fixed; font-size: 12px; line-height: 15px; }
.props th { height: 21px; width: 110px; padding: 0 0 0 4px; text-align: left; font-weight: 400; background: #f0f0f0; border: 1px solid #c4c4c4; }
.props th + th { width: auto; padding-left: 3px; border-left-width: 2px; border-right: 0; }
.props td { height: 16px; padding: 0 0 0 20px; border-bottom: 1px solid #c8c8c8; white-space: nowrap; }
.props td + td { padding-left: 3px; border-left: 1px solid #c8c8c8; }
.props .cat td { background: #fff; font-weight: 700; padding-left: 8px; }
.cat i { display: inline-block; width: 6px; height: 6px; margin-right: 6px; background: #aaa; clip-path: polygon(100% 0, 100% 100%, 0 100%); }
.dark { color: #000; }
.off { color: #a5a5a5; }
.mono { font-family: "Liberation Mono", monospace; font-size: 10px; }
.props .mono { display: block; line-height: 15px; }
.cell { display: flex; align-items: center; gap: 5px; }
.cell.tight { gap: 1px; margin-left: -2px; }
.ln { width: 48px; height: 1px; background: #000; }
.ln.thin { background: #bbb; }
.sw { width: 12px; height: 12px; background: #0f0; border: 1px solid #000; }
.props-help { height: 54px; flex: none; background: #f0f0f0; border: solid #fff; border-width: 0 2px 1px 0; box-shadow: inset 0 1px #c0c0c0; }

/* drawing documents */
.docs { flex: 1; min-width: 0; margin-left: 6px; display: flex; flex-direction: column; }
.doc-tabs { height: 22px; flex: none; display: flex; align-items: flex-end; }
.doc { position: relative; height: 20px; white-space: nowrap; text-align: right; }
.doc > svg:first-child { position: absolute; inset: 0; width: 100%; height: 20px; overflow: visible; }
.doc span { position: relative; font-size: 13px; line-height: 18px; }
.t1 { width: 112px; padding-right: 12px; }
.t2 { width: 123px; padding-right: 13px; }
.t3 { width: 110px; padding-right: 14px; }
.t4 { width: 144px; margin-left: -16px; padding-right: 5px; display: flex; align-items: center; justify-content: flex-end; gap: 12px; font-weight: 700; }
.t4 .x { position: relative; width: 10px; height: 10px; }
.canvas { flex: 1; min-height: 0; background: #000; }
.canvas svg { width: 100%; height: 100%; }
.notes { font: 5px "Noto Sans CJK SC", sans-serif; fill: #0d0; }
.sheet-tabs { height: 18px; flex: none; display: flex; border-top: 1px solid #555; }
.nav { display: flex; align-items: center; gap: 8px; padding: 0 12px 0 2px; margin-right: -5px; }
.nav svg { width: 8px; height: 8px; }
.sheet { position: relative; width: 48px; height: 17px; display: flex; justify-content: center; align-items: flex-start; }
.sheet.on { font-size: 14px; font-weight: 700; }
.sheet.second { margin-left: -4px; }
.sheet svg { position: absolute; inset: 0; width: 48px; height: 17px; overflow: visible; }
.sheet span { position: relative; line-height: 13px; }

/* command line */
.command { height: 38px; flex: none; margin-left: 23px; border-top: 5px solid #cdcdcd; display: flex; flex-direction: column; }
.command h2 { line-height: 22px; padding: 0 4px; margin-bottom: 3px; }
.log { flex: 1; overflow: hidden; border: solid #666; border-width: 1px 0 0 1px; background: #fff; color: #000; padding-left: 2px; font-size: 12px; line-height: 6px; white-space: nowrap; }
```
